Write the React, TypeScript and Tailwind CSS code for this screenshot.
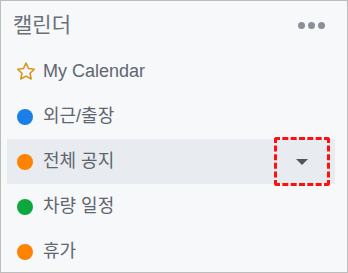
import React from 'react';

const items = [
  { label: '외근/출장', color: 'bg-[#1a7fe8]' },
  { label: '전체 공지', color: 'bg-[#ff8200]', active: true },
  { label: '차량 일정', color: 'bg-[#0aa83f]' },
  { label: '휴가', color: 'bg-[#ff8200]' },
];

function Star() {
  return (
    <svg width="22" height="21" viewBox="0 0 24 24" fill="none" stroke="#d4961c" strokeWidth="1.8" strokeLinejoin="round">
      <path d="M12 2.5l2.9 6.1 6.6.8-4.9 4.6 1.3 6.6L12 17.3l-5.9 3.3 1.3-6.6-4.9-4.6 6.6-.8z" />
    </svg>
  );
}

export default function App() {
  return (
    <div
      className="flex h-[273px] w-[348px] flex-col border border-[#bdbdbd] bg-[#f7f8fa] text-[#5f6670]"
      style={{ fontFamily: '"Liberation Sans", "Noto Sans CJK KR", sans-serif' }}
    >
      <div className="flex h-[48px] shrink-0 items-center justify-between pl-3 pr-[22px]">
        <span className="text-[21px] text-[#6b7079]">캘린더</span>
        <span className="flex gap-[3px]">
          <i className="h-[7px] w-[7px] rounded-full bg-[#8a909a]" />
          <i className="h-[7px] w-[7px] rounded-full bg-[#8a909a]" />
          <i className="h-[7px] w-[7px] rounded-full bg-[#8a909a]" />
        </span>
      </div>
      <div className="flex h-[45px] shrink-0 items-center gap-[6px] pl-[14px] text-[18px]">
        <Star />
        <span>My Calendar</span>
      </div>
      {items.map((it) => (
        <div
          key={it.label}
          className={`ml-[6px] mr-[12px] flex h-[45px] shrink-0 items-center pl-[10px] text-[18px] ${it.active ? 'bg-[#e8ebef]' : ''}`}
        >
          <span className={`h-[16px] w-[16px] rounded-full ${it.color}`} />
          <span className="ml-[10px] flex-1">{it.label}</span>
          {it.active && (
            <span className="mr-[5px] flex h-[49px] w-[56px] items-center justify-center rounded-[3px] border-[3px] border-dashed border-[#ff1010]">
              <svg width="12" height="6" viewBox="0 0 12 6">
                <path d="M0 0h12L6 6z" fill="#555" />
              </svg>
            </span>
          )}
        </div>
      ))}
    </div>
  );
}
